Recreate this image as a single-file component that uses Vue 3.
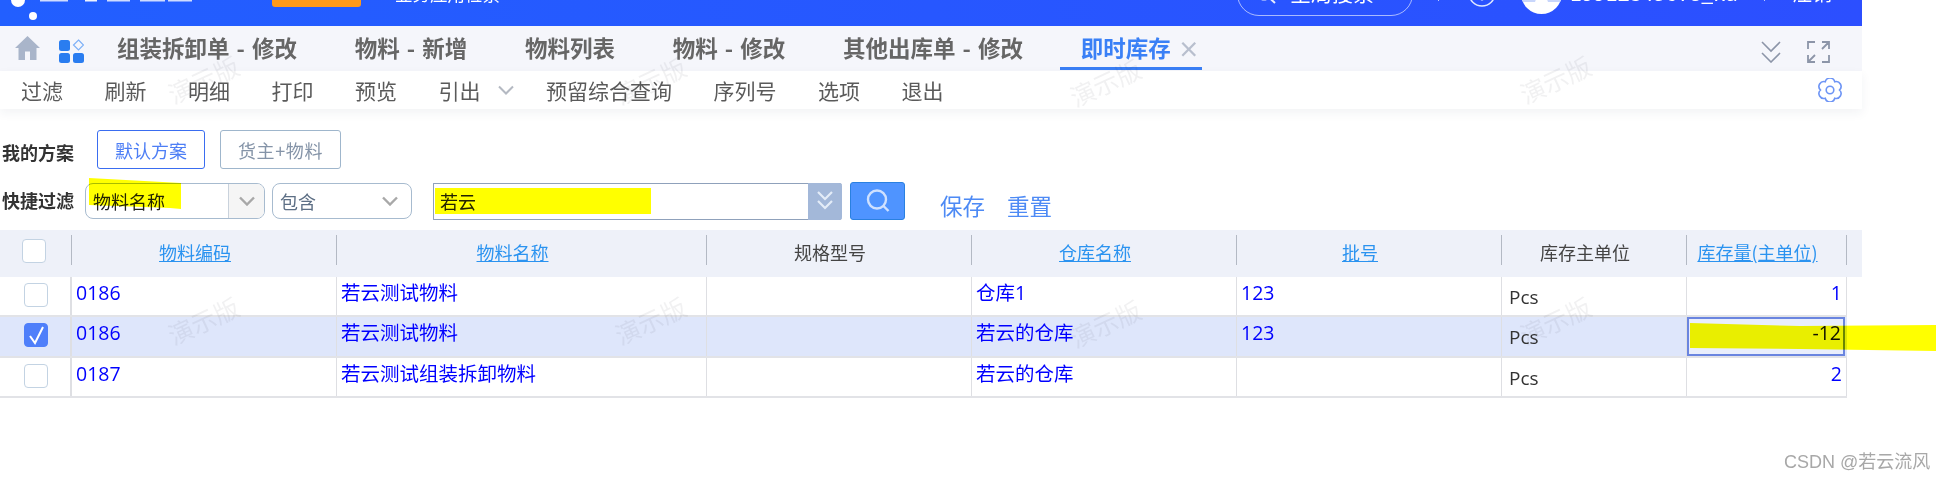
<script setup>
const tabs = ['组装拆卸单 - 修改', '物料 - 新增', '物料列表', '物料 - 修改', '其他出库单 - 修改']
const tools = ['过滤', '刷新', '明细', '打印', '预览']
const tools2 = ['预留综合查询', '序列号', '选项', '退出']
const columns = [
  { label: '物料编码', link: true },
  { label: '物料名称', link: true },
  { label: '规格型号', link: false },
  { label: '仓库名称', link: true },
  { label: '批号', link: true },
  { label: '库存主单位', link: false },
  { label: '库存量(主单位)', link: true }
]
const rows = [
  { checked: false, code: '0186', name: '若云测试物料', store: '仓库1', lot: '123', qty: '1' },
  { checked: true, code: '0186', name: '若云测试物料', store: '若云的仓库', lot: '123', qty: '-12' },
  { checked: false, code: '0187', name: '若云测试组装拆卸物料', store: '若云的仓库', lot: '', qty: '2' }
]
const marks = [
  [203, 79], [650, 80], [1105, 82], [1555, 79],
  [203, 320], [650, 320], [1105, 323], [1555, 320]
]
</script>

<template>
  <div class="page">
    <div class="app">
      <header class="topbar">
        <svg class="brand" width="200" height="26" viewBox="0 0 200 26">
          <circle cx="18" cy="0" r="7" fill="#fff" />
          <circle cx="33" cy="16" r="4" fill="#fff" />
          <rect x="40" y="0" width="28" height="1.5" fill="#cfdcff" />
          <rect x="85" y="0" width="12" height="1.5" fill="#eef2ff" />
          <rect x="107" y="0" width="23" height="1.5" fill="#cfdcff" />
          <rect x="140" y="0" width="25" height="1.5" fill="#cfdcff" />
          <rect x="168" y="0" width="24" height="1.5" fill="#cfdcff" />
        </svg>
        <div class="orange"></div>
        <span class="cut cut-app">业务应用检索</span>
        <div class="pill">
          <svg width="22" height="22" viewBox="0 0 22 22" fill="none" stroke="#e6ecff" stroke-width="2">
            <circle cx="10" cy="9" r="7.5" />
            <path d="M15 14.5l6 5.5" />
          </svg>
          <span class="cut-pill">全局搜索</span>
        </div>
        <i class="tick tick-a"></i>
        <svg class="info" width="28" height="28" viewBox="0 0 28 28" fill="none" stroke="#dfe7ff" stroke-width="1.5">
          <circle cx="14" cy="14" r="13" />
          <circle cx="14" cy="20" r="1.6" fill="#dfe7ff" stroke="none" />
        </svg>
        <svg class="avatar" width="41" height="41" viewBox="0 0 41 41">
          <circle cx="20.5" cy="20.5" r="20.5" fill="#fff" />
          <path d="M2 29A20.5 20.5 0 0 1 2 12H20.5L14 29Z" fill="#c8d6fb" />
          <path d="M39 29A20.5 20.5 0 0 0 39 12H20.5L27 29Z" fill="#c8d6fb" />
          <circle cx="20.5" cy="14" r="9" fill="#fff" />
        </svg>
        <span class="cut cut-user">19912345678_kd</span>
        <i class="tick tick-b"></i>
        <span class="cut cut-exit">注销</span>
      </header>

      <nav class="tabbar">
        <svg class="home" width="25" height="24" viewBox="0 0 25 24">
          <path d="M12.5 0L25 12H21.5V24H15V15.5H10V24H3.500V12H0Z" fill="#a9b5ca" />
        </svg>
        <svg class="apps" width="25" height="24" viewBox="0 0 25 24">
          <rect x="0" y="1" width="11" height="11" rx="2.500" fill="#2a7df0" />
          <rect x="0" y="14" width="11" height="10" rx="2.500" fill="#2a7df0" />
          <rect x="14" y="14" width="11" height="10" rx="2.500" fill="#2a7df0" />
          <path d="M19.500 1L24.500 6L19.500 11L14.500 6Z" fill="none" stroke="#7db0f7" stroke-width="1.2" />
        </svg>
        <div class="tabs">
          <span v-for="t in tabs" :key="t" class="tab">{{ t }}</span>
          <span class="tab active">即时库存<em class="close">×</em></span>
        </div>
        <div class="tab-tools">
          <svg width="20" height="22" viewBox="0 0 20 22" fill="none" stroke="#8c95a8" stroke-width="1.6">
            <path d="M1 1l9 9 9-9M1 12l9 9 9-9" />
          </svg>
          <svg width="23" height="22" viewBox="0 0 23 22" fill="none" stroke="#8c95a8" stroke-width="1.8">
            <path d="M8 1H1V8M15 1H22V8M22 1l-7 7M1 14V21H8M1 21l7-7M22 14V21H15" />
          </svg>
        </div>
      </nav>

      <div class="toolbar">
        <span v-for="t in tools" :key="t" class="tool">{{ t }}</span>
        <span class="tool tool-menu">引出
          <svg width="16" height="10" viewBox="0 0 16 10" fill="none" stroke="#b4b9c2" stroke-width="2">
            <path d="M1 1.500l7 7 7-7" />
          </svg>
        </span>
        <span v-for="t in tools2" :key="t" class="tool">{{ t }}</span>
        <svg class="gear" width="24" height="24" viewBox="0 0 23 24" fill="none" stroke="#6d94f5" stroke-width="1.6">
          <path d="M16.250 3.750A4.900 4.900 0 0 1 21 12A4.900 4.900 0 0 1 16.250 20.250A4.900 4.900 0 0 1 6.750 20.250A4.900 4.900 0 0 1 2 12A4.900 4.900 0 0 1 6.750 3.750A4.900 4.900 0 0 1 16.250 3.750Z" />
          <circle cx="11.500" cy="12" r="3.800" />
        </svg>
      </div>

      <section class="filters">
        <div class="filter-row scheme-row">
          <span class="label">我的方案</span>
          <button class="scheme on">默认方案</button>
          <button class="scheme">货主+物料</button>
        </div>
        <div class="filter-row quick-row">
          <span class="label">快捷过滤</span>
          <div class="select field-select">
            <span class="select-text">物料名称</span>
            <span class="select-arrow">
              <svg width="16" height="10" viewBox="0 0 16 10" fill="none" stroke="#a8a8a8" stroke-width="2.400"><path d="M1 1.500l7 7 7-7" /></svg>
            </span>
          </div>
          <div class="select op-select">
            <span class="op-text">包含</span>
            <svg width="16" height="10" viewBox="0 0 16 10" fill="none" stroke="#a8a8a8" stroke-width="2.400"><path d="M1 1.500l7 7 7-7" /></svg>
          </div>
          <div class="search-box">
            <span class="search-value">若云</span>
            <span class="search-more">
              <svg width="18" height="22" viewBox="0 0 18 22" fill="none" stroke="#e4ecf8" stroke-width="2.200">
                <path d="M2 2l7 7 7-7M2 11l7 7 7-7" />
              </svg>
            </span>
          </div>
          <button class="search-btn">
            <svg width="26" height="26" viewBox="0 0 26 26" fill="none" stroke="#cfe1ff" stroke-width="2.400">
              <circle cx="12" cy="11.500" r="9" />
              <path d="M18.500 18l5 5" />
            </svg>
          </button>
          <a class="action first">保存</a>
          <a class="action">重置</a>
        </div>
      </section>

      <div class="thead grid">
        <div class="th th-check"><span class="check head-check"></span></div>
        <div v-for="c in columns" :key="c.label" class="th">
          <span class="th-text" :class="c.link ? 'th-link' : 'th-plain'">{{ c.label }}</span>
        </div>
      </div>
      <div class="tbody">
        <div v-for="(r, i) in rows" :key="i" class="row grid" :class="['row-' + i, { selected: r.checked }]">
          <div class="td td-check">
            <span class="check" :class="{ checked: r.checked }">
              <svg v-if="r.checked" width="17" height="20" viewBox="0 0 17 20" fill="none" stroke="#fff" stroke-width="2">
                <path d="M2 11l5 7L15 2" />
              </svg>
            </span>
          </div>
          <div class="td blue">{{ r.code }}</div>
          <div class="td blue">{{ r.name }}</div>
          <div class="td"></div>
          <div class="td blue">{{ r.store }}</div>
          <div class="td blue">{{ r.lot }}</div>
          <div class="td unit">Pcs</div>
          <div class="td qty" :class="r.checked ? 'qty-active' : 'blue'">{{ r.qty }}</div>
        </div>
      </div>
    </div>

    <span v-for="(m, i) in marks" :key="i" class="mark" :style="{ left: m[0] + 'px', top: m[1] + 'px' }">演示版</span>

    <svg class="marker" width="1936" height="480" viewBox="0 0 1936 480">
      <path d="M89 178L181 183V209L170 208L89 205Z" fill="#ffff00" />
      <path d="M435 188H651V214H435Z" fill="#ffff00" />
      <path d="M1690 323L1800 326L1936 325V351L1800 349L1690 348Z" fill="#ffff00" />
    </svg>

    <span class="csdn">CSDN @若云流风</span>
  </div>
</template>

<style>
html, body { margin: 0; background: #fff; }
</style>

<style scoped>
.page {
  position: relative;
  width: 1936px;
  height: 480px;
  overflow: hidden;
  background: #fff;
  font-family: "Noto Sans CJK SC", "Noto Sans", sans-serif;
}
.app { width: 1862px; }

.topbar {
  height: 26px;
  display: flex;
  align-items: flex-end;
  overflow: hidden;
  background: linear-gradient(90deg, #225fff, #2c4fff);
  color: #fff;
}
.brand { flex: none; margin-bottom: 0; }
.orange {
  flex: none;
  width: 89px;
  height: 30px;
  margin: 0 0 19px 72px;
  background: #ff9a1a;
  border-radius: 3px;
}
.cut { flex: none; white-space: nowrap; line-height: 22px; font-size: 20px; }
.cut-app { margin: 0 0 21px 34px; width: 105px; font-size: 17.500px; }
.pill {
  flex: none;
  box-sizing: border-box;
  width: 176px;
  height: 44px;
  margin: 0 0 10px 737px;
  border: 1px solid rgba(255, 255, 255, 0.6);
  border-radius: 24px;
  display: flex;
  align-items: flex-end;
  padding: 0 0 10px 16px;
  gap: 14px;
}
.pill svg { flex: none; }
.cut-pill { font-size: 21px; line-height: 22px; margin-bottom: 2px; white-space: nowrap; }
.tick { flex: none; width: 1px; height: 10px; background: #b9c8ff; margin-bottom: 25px; }
.tick-a { margin-left: 25px; }
.info { flex: none; margin: 0 0 19px 29px; }
.avatar { flex: none; margin: 0 0 12px 25px; }
.cut-user { margin: 0 0 23px 8px; width: 166px; font-size: 21.500px; }
.tick-b { margin-left: 28px; }
.cut-exit { margin: 0 0 22px 27px; width: 42px; }

.tabbar {
  height: 45px;
  display: flex;
  align-items: flex-start;
  background: #f5f6fb;
}
.home { flex: none; margin: 10px 0 0 15px; }
.apps { flex: none; margin: 13px 0 0 19px; }
.tabs { flex: none; display: flex; gap: 57.700px; margin-left: 33px; }
.tab {
  position: relative;
  font-size: 22.500px;
  line-height: 32px;
  margin-top: 5px;
  font-weight: 700;
  color: #666;
  white-space: nowrap;
  word-spacing: 2px;
}
.active { color: #3a80f6; }
.active::after {
  content: "";
  position: absolute;
  left: -21px;
  width: 142px;
  bottom: -7px;
  height: 3px;
  background: #3a7ff5;
}
.close {
  position: absolute;
  left: 97px;
  top: 0;
  font-style: normal;
  font-weight: 700;
  font-size: 22px;
  color: #b8bfce;
}
.tab-tools {
  margin: 15px 32px 0 auto;
  display: flex;
  gap: 26px;
}

.toolbar {
  position: relative;
  height: 38px;
  display: flex;
  align-items: center;
  gap: 41.500px;
  padding-left: 21px;
  background: #fff;
  box-shadow: 0 4px 10px rgba(30, 50, 90, 0.06);
}
.tool {
  font-size: 21px;
  line-height: 30px;
  font-weight: 400;
  color: #5a5a5a;
  white-space: nowrap;
}
.tool-menu { display: flex; align-items: center; gap: 17px; margin-right: -9px; }
.gear { margin-left: auto; margin-right: 20px; }

.filters { padding: 21px 0 10px; }
.filter-row { display: flex; align-items: center; }
.scheme-row { height: 39px; margin-bottom: 13px; }
.quick-row { height: 38px; }
.label {
  flex: none;
  width: 72px;
  margin-left: 2px;
  font-size: 18px;
  font-weight: 700;
  color: #333;
  white-space: nowrap;
}
.scheme-row .label { position: relative; top: 2px; }
.quick-row .label { position: relative; top: -1px; }
.scheme {
  box-sizing: border-box;
  height: 39px;
  padding: 0;
  width: 121px;
  margin-left: 15px;
  background: #fff;
  border: 1px solid #9fb6cc;
  border-radius: 3px;
  font-family: inherit;
  font-size: 18px;
  letter-spacing: 0.6px;
  color: #8594a8;
}
.scheme.on {
  width: 108px;
  margin-left: 23px;
  border-color: #3a6df0;
  color: #4d7ef5;
  letter-spacing: 0;
}
.select {
  flex: none;
  box-sizing: border-box;
  height: 36px;
  display: flex;
  align-items: center;
  background: #fff;
  border: 1px solid #a7bbcf;
  border-radius: 8px;
  overflow: hidden;
  font-size: 18px;
}
.field-select { width: 180px; margin-left: 11px; }
.select-text { flex: 1; padding-left: 7px; color: #222; white-space: nowrap; }
.select-arrow {
  flex: none;
  width: 35px;
  height: 100%;
  display: flex;
  align-items: center;
  justify-content: center;
  background: #f5f5f5;
  border-left: 1px solid #c9d2dc;
}
.op-select {
  width: 140px;
  margin-left: 7px;
  padding: 0 13px 0 7px;
  justify-content: space-between;
}
.op-text { color: #5d6f85; }
.search-box {
  flex: none;
  box-sizing: border-box;
  width: 409px;
  height: 37px;
  margin-left: 21px;
  display: flex;
  align-items: center;
  justify-content: space-between;
  border: 1px solid #8fa1bb;
  border-right: 0;
  border-radius: 1px 3px 3px 1px;
  font-size: 18px;
  color: #222;
}
.search-value { padding-left: 6px; }
.search-more {
  width: 34px;
  height: 37px;
  margin: -1px 0;
  display: flex;
  align-items: center;
  justify-content: center;
  background: #a3b8d9;
  border-radius: 0 3px 3px 0;
}
.search-btn {
  flex: none;
  box-sizing: border-box;
  width: 55px;
  height: 38px;
  margin-left: 8px;
  padding: 0;
  display: flex;
  align-items: center;
  justify-content: center;
  background: #4f94ff;
  border: 1px solid #2a80e0;
  border-radius: 3px;
}
.action {
  flex: none;
  position: relative;
  top: 4px;
  margin-left: 22px;
  font-size: 22.500px;
  color: #4d8af5;
  white-space: nowrap;
}
.action.first { margin-left: 35px; }

.grid {
  display: grid;
  grid-template-columns: 72px 265px 370px 265px 265px 265px 185px 160px;
}
.thead {
  box-sizing: border-box;
  height: 47px;
  padding: 0 16px 0 0;
  background: #eef1f9;
  align-items: center;
}
.th {
  box-sizing: border-box;
  height: 30px;
  margin-top: -8px;
  padding-right: 18px;
  display: flex;
  align-items: center;
  justify-content: center;
  border-right: 1px solid #b3b9c4;
  font-size: 18px;
  white-space: nowrap;
}
.th-check { justify-content: flex-start; padding: 0 0 0 22px; }
.th-text { position: relative; top: 2px; }
.th-link { color: #2b93f0; text-decoration: underline; }
.th-plain { color: #444; }
.check {
  box-sizing: border-box;
  display: flex;
  align-items: center;
  justify-content: center;
  width: 24px;
  height: 24px;
  background: #fff;
  border: 1px solid #c3d3e3;
  border-radius: 4px;
}
.head-check { margin-top: 3px; }
.check.checked { background: #4f7ffa; border-color: #4f7ffa; }

.tbody { width: 1847px; }
.row { box-sizing: border-box; border-bottom: 2px solid #e2e3e7; }
.row-0 { height: 40px; }
.row-1 { height: 41px; }
.row-2 { height: 40px; }
.selected { background: #dee6fb; }
.td {
  box-sizing: border-box;
  padding: 0 4px;
  border-right: 1px solid #dedfe3;
  font-family: "Open Sans", "Noto Sans CJK SC", sans-serif;
  font-size: 19.500px;
  line-height: 32px;
  white-space: nowrap;
  color: #333;
}
.td-check { padding: 6px 0 0 24px; border-right-width: 2px; }
.blue { color: #0000ff; }
.unit { padding: 4px 0 0 7px; font-size: 19px; }
.qty { text-align: right; }
.qty-active {
  box-sizing: border-box;
  margin: 0 2px 0 0;
  height: 39px;
  padding: 0 2px 0 0;
  border: 2px solid #6a85e0;
  color: #111;
  line-height: 27px;
  background: #e9eefc;
}

.mark {
  position: absolute;
  transform: translate(-50%, -50%) rotate(-25deg);
  font-size: 25px;
  color: rgba(60, 60, 70, 0.07);
  white-space: nowrap;
  pointer-events: none;
}
.marker {
  position: absolute;
  left: 0;
  top: 0;
  mix-blend-mode: multiply;
  pointer-events: none;
}
.csdn {
  position: absolute;
  left: 1784px;
  top: 451px;
  font-family: "Liberation Sans", "Noto Sans CJK SC", sans-serif;
  font-size: 18px;
  line-height: 22px;
  color: #a8a8a8;
  white-space: nowrap;
}
</style>
